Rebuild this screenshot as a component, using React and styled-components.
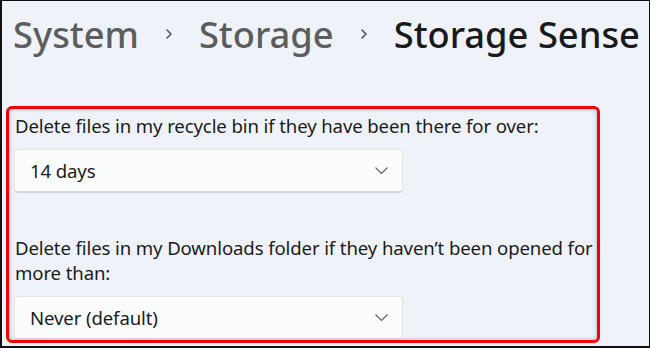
import React from 'react';
import styled, { createGlobalStyle } from 'styled-components';

const GlobalStyle = createGlobalStyle`
  html, body {
    margin: 0;
    padding: 0;
    background: #eff3f9;
  }
  * {
    box-sizing: border-box;
  }
`;

const Frame = styled.div`
  width: 650px;
  height: 348px;
  overflow: hidden;
  background: #eff3f9;
  border-style: solid;
  border-color: #111;
  border-width: 1px 1px 2px 2px;
  font-family: 'Noto Sans', 'Open Sans', sans-serif;
  color: #1b1b1b;
`;

const Breadcrumb = styled.div`
  display: flex;
  align-items: center;
  gap: 26px;
  height: 44px;
  margin-top: 11px;
  padding-left: 11px;
  font-size: 36.3px;
  line-height: 44px;
  font-weight: 500;
`;

const Crumb = styled.span`
  color: ${props => (props.current ? '#1a1a1a' : '#5d5d5d')};
  white-space: nowrap;
`;

const CrumbChevron = styled.svg`
  width: 8px;
  height: 10px;
  flex: none;
`;

const Highlight = styled.section`
  width: 594px;
  height: 237px;
  margin: 50px 0 0 4px;
  padding: 4px 0 0 5px;
  border: 3px solid #f20000;
  border-radius: 6px;
  box-shadow: inset 0 0 4px rgba(0, 0, 0, 0.28);
  overflow: hidden;
  display: flex;
  flex-direction: column;
  align-items: flex-start;
`;

const Label = styled.div`
  font-size: 18.6px;
  letter-spacing: -0.12px;
  line-height: 25px;
  padding-left: 1px;
  margin-top: ${props => props.gap || 0}px;
`;

const Dropdown = styled.div`
  width: 389px;
  height: 44px;
  flex: none;
  margin-top: 11px;
  display: flex;
  align-items: center;
  justify-content: space-between;
  padding: 0 14px 0 15px;
  background: #fbfcfe;
  border: 1px solid #e3e5e9;
  border-bottom: 2px solid #d2d4d8;
  border-radius: 4px;
  font-size: 18.6px;
  letter-spacing: -0.12px;
  line-height: 25px;
`;

const Chevron = () => (
  <CrumbChevron viewBox="0 0 8 10">
    <path d="M2 1 L6 5 L2 9" fill="none" stroke="#555" strokeWidth="1.6" strokeLinecap="round" strokeLinejoin="round" />
  </CrumbChevron>
);

const DownArrow = styled.svg`
  width: 13px;
  height: 7px;
  flex: none;
`;

const Select = ({ value }) => (
  <Dropdown>
    <span>{value}</span>
    <DownArrow viewBox="0 0 13 7">
      <path d="M0.5 0.5 L6.5 6.5 L12.5 0.5" fill="none" stroke="#5f5f5f" strokeWidth="1.1" />
    </DownArrow>
  </Dropdown>
);

export default function App() {
  return (
    <>
      <GlobalStyle />
      <Frame>
        <Breadcrumb>
          <Crumb>System</Crumb>
          <Chevron />
          <Crumb>Storage</Crumb>
          <Chevron />
          <Crumb current>Storage Sense</Crumb>
        </Breadcrumb>
        <Highlight>
          <Label>Delete files in my recycle bin if they have been there for over:</Label>
          <Select value="14 days" />
          <Label gap={42}>
            Delete files in my Downloads folder if they haven’t been opened for more than:
          </Label>
          <Select value="Never (default)" />
        </Highlight>
      </Frame>
    </>
  );
}
